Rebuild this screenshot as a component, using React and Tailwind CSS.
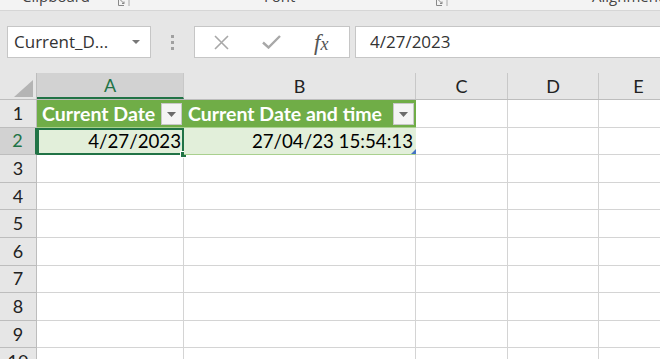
import React from 'react';

const cols = [
  { key: 'A', w: 'w-[147px]' },
  { key: 'B', w: 'w-[232px]' },
  { key: 'C', w: 'w-[92px]' },
  { key: 'D', w: 'w-[91px]' },
  { key: 'E', w: 'w-[80px]' },
];

const rows = [3, 4, 5, 6, 7, 8, 9, 10];

function FilterButton() {
  return (
    <div className="absolute right-[2px] top-[3px] w-[21px] h-[22px] bg-[#f4f4f4] border border-[#c8c8c8] flex items-center justify-center">
      <svg width="9" height="5" viewBox="0 0 9 5"><path d="M0 0h9L4.5 5z" fill="#6b6b6b" /></svg>
    </div>
  );
}

function Launcher({ className }) {
  return (
    <svg className={className} width="12" height="6" viewBox="0 0 12 6">
      <path d="M0.5 0V5.5H6" stroke="#888" fill="none" />
      <path d="M2.5 0L6 3.5M6 1.5V3.5H4" stroke="#888" fill="none" />
      <path d="M11 0V6" stroke="#aaa" />
    </svg>
  );
}

function RowHeader({ n, active }) {
  return (
    <div
      className={`w-[37px] shrink-0 flex items-center justify-center border-r border-b border-[#bdbdbd] text-[18px] ${
        active ? 'bg-[#d2d2d2] text-[#217346] border-r-2 border-r-[#217346]' : 'bg-[#e6e6e6] text-[#222]'
      }`}
    >
      {n}
    </div>
  );
}

export default function App() {
  return (
    <div className="w-[660px] h-[359px] overflow-hidden bg-white font-['Lato',sans-serif]">
      {/* ribbon bottom */}
      <div className="h-[11px] bg-[#f3f3f3] border-b border-[#d6d6d6] relative overflow-hidden font-['Open_Sans',sans-serif] text-[15px] text-[#444]">
        <span className="absolute left-[22px] top-[-15px]">Clipboard</span>
        <Launcher className="absolute left-[118px] top-0" />
        <span className="absolute left-[264px] top-[-15px]">Font</span>
        <Launcher className="absolute left-[436px] top-0" />
        <span className="absolute left-[592px] top-[-15px]">Alignment</span>
      </div>

      {/* formula bar */}
      <div className="h-[62px] bg-[#e6e6e6] flex items-start pt-[15px] font-['Open_Sans',sans-serif]">
        <div className="ml-[7px] w-[144px] h-[32px] bg-white border border-[#c6c6c6] flex items-center pl-[6px] pr-[10px]">
          <span className="text-[17px] text-[#333] flex-1">Current_D...</span>
          <svg width="8" height="4" viewBox="0 0 8 4"><path d="M0 0h8L4 4z" fill="#777" /></svg>
        </div>
        <div className="w-[43px] h-[32px] flex flex-col items-center justify-center gap-[3px]">
          <span className="w-[3px] h-[3px] bg-[#a0a0a0]" />
          <span className="w-[3px] h-[3px] bg-[#a0a0a0]" />
          <span className="w-[3px] h-[3px] bg-[#a0a0a0]" />
        </div>
        <div className="w-[156px] h-[32px] bg-white border border-[#c6c6c6] flex items-center">
          <svg className="ml-[19px]" width="15" height="15" viewBox="0 0 15 15">
            <path d="M1 1l13 13M14 1L1 14" stroke="#a8a8a8" strokeWidth="1.6" />
          </svg>
          <svg className="ml-[33px]" width="19" height="14" viewBox="0 0 19 14">
            <path d="M1 7.5l5.5 5L18 1" stroke="#a8a8a8" strokeWidth="2.4" fill="none" />
          </svg>
          <span className="ml-[33px] font-['Liberation_Serif',serif] italic text-[23px] text-[#555] leading-none">
            f<span className="text-[18px]">x</span>
          </span>
        </div>
        <div className="ml-[5px] flex-1 h-[32px] bg-white border border-[#c6c6c6] border-r-0 flex items-center pl-[14px]">
          <span className="text-[17px] text-[#333]">4/27/2023</span>
        </div>
      </div>

      {/* column headers */}
      <div className="h-[27px] flex bg-[#e6e6e6] border-b border-[#bdbdbd]">
        <div className="w-[37px] shrink-0 border-r border-[#bdbdbd] flex items-end justify-end pr-[3px] pb-[2px]">
          <svg width="19" height="17" viewBox="0 0 19 17"><path d="M19 0V17H0z" fill="#b4b4b4" /></svg>
        </div>
        {cols.map((c) => (
          <div
            key={c.key}
            className={`${c.w} shrink-0 flex items-center justify-center text-[18px] border-r border-[#c8c8c8] ${
              c.key === 'A' ? 'bg-[#d2d2d2] text-[#217346] border-b-2 border-b-[#217346]' : 'text-[#222]'
            }`}
          >
            {c.key}
          </div>
        ))}
      </div>

      {/* row 1 */}
      <div className="h-[27.6px] flex">
        <RowHeader n={1} />
        <div className="w-[147px] shrink-0 relative bg-[#70ad47] border-b border-[#a9d08e] flex items-center pl-[5px] text-white font-bold text-[19.5px]">
          Current Date
          <FilterButton />
        </div>
        <div className="w-[232px] shrink-0 relative bg-[#70ad47] border-b border-[#a9d08e] flex items-center pl-[4px] text-white font-bold text-[19.5px]">
          Current Date and time
          <FilterButton />
        </div>
        <div className="w-[92px] shrink-0 border-r border-b border-[#d4d4d4]" />
        <div className="w-[91px] shrink-0 border-r border-b border-[#d4d4d4]" />
        <div className="w-[80px] shrink-0 border-b border-[#d4d4d4]" />
      </div>

      {/* row 2 */}
      <div className="h-[27.6px] flex">
        <RowHeader n={2} active />
        <div className="w-[147px] shrink-0 relative bg-[#e2efda] border-2 border-[#217346] flex items-center justify-end pr-[1px] text-[18.7px] text-black">
          4/27/2023
          <span className="absolute right-[-5px] bottom-[-5px] w-[7px] h-[7px] bg-[#217346] border border-white" />
        </div>
        <div className="w-[232px] shrink-0 relative bg-[#e2efda] border-b border-[#a9d08e] flex items-center justify-end pr-[3px] text-[18.7px] text-black">
          27/04/23 15:54:13
          <span className="absolute right-0 bottom-0 w-0 h-0 border-l-[5px] border-l-transparent border-b-[5px] border-b-[#4472c4]" />
        </div>
        <div className="w-[92px] shrink-0 border-r border-b border-[#d4d4d4]" />
        <div className="w-[91px] shrink-0 border-r border-b border-[#d4d4d4]" />
        <div className="w-[80px] shrink-0 border-b border-[#d4d4d4]" />
      </div>

      {rows.map((n) => (
        <div key={n} className="h-[27.6px] flex">
          <RowHeader n={n} />
          {cols.map((c) => (
            <div key={c.key} className={`${c.w} shrink-0 border-r border-b border-[#d4d4d4]`} />
          ))}
        </div>
      ))}
    </div>
  );
}
